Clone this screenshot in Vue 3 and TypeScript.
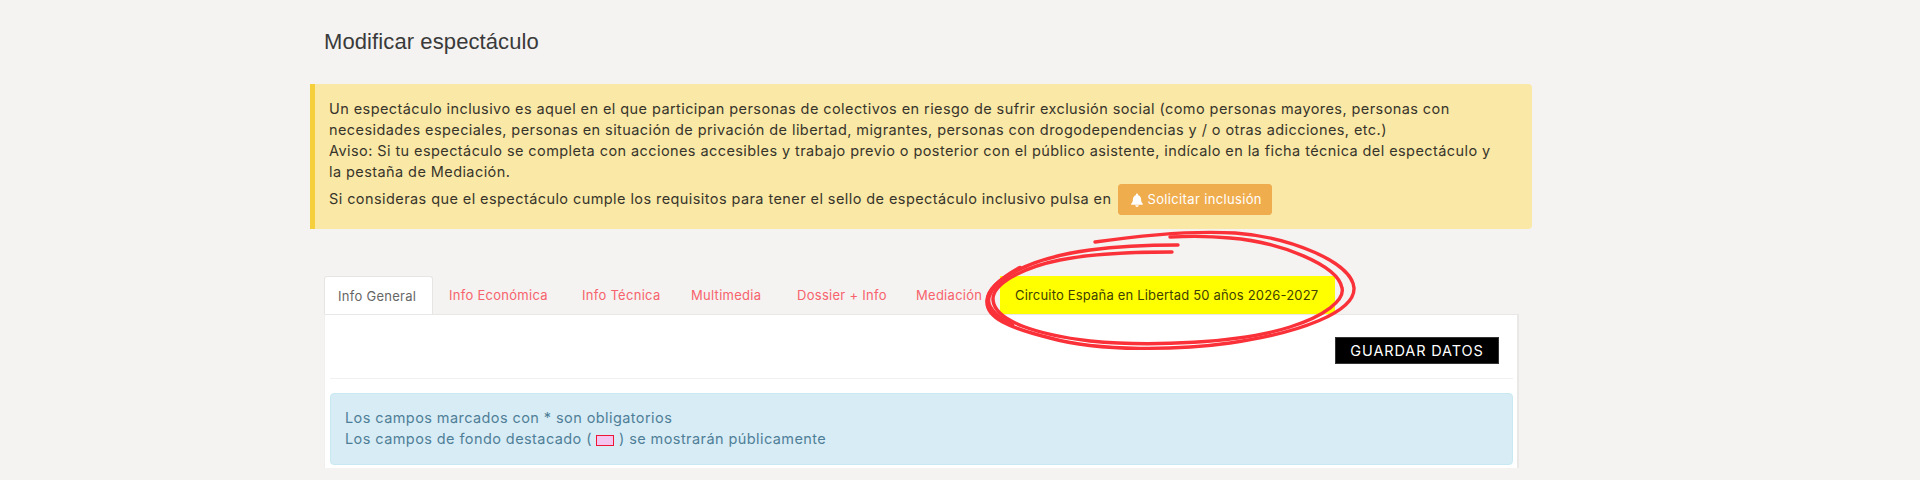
<script setup lang="ts">
const tabs: string[] = ['Info Económica', 'Info Técnica', 'Multimedia', 'Dossier + Info', 'Mediación']
</script>

<template>
  <main class="page">
    <h1 class="title">Modificar espectáculo</h1>
    <section class="notice">
      <p class="notice-text">
        Un espectáculo inclusivo es aquel en el que participan personas de colectivos en riesgo de sufrir exclusión social (como personas mayores, personas con<br />
        necesidades especiales, personas en situación de privación de libertad, migrantes, personas con drogodependencias y / o otras adicciones, etc.)<br />
        Aviso: Si tu espectáculo se completa con acciones accesibles y trabajo previo o posterior con el público asistente, indícalo en la ficha técnica del espectáculo y<br />
        la pestaña de Mediación.
      </p>
      <div class="notice-action">
        <span class="action-text">Si consideras que el espectáculo cumple los requisitos para tener el sello de espectáculo inclusivo pulsa en</span>
        <button class="request" type="button">
          <svg class="bell" viewBox="0 0 24 24" aria-hidden="true">
            <path d="M12 1a2 2 0 0 0-2 2v.7C6.900 4.600 5 7.400 5 10.800c0 4.200-1.100 5.700-3 7.700V20h20v-1.500c-1.900-2-3-3.500-3-7.700 0-3.400-1.900-6.200-5-7.100V3a2 2 0 0 0-2-2zM9 21a3 3 0 0 0 6 0z" />
          </svg>
          <span>Solicitar inclusión</span>
        </button>
      </div>
    </section>

    <section class="editor">
      <nav class="tabs">
        <a class="tab active">Info General</a>
        <a v-for="tab in tabs" :key="tab" class="tab">{{ tab }}</a>
        <a class="tab highlight">Circuito España en Libertad 50 años 2026-2027</a>
      </nav>
      <div class="panel">
        <div class="toolbar">
          <button class="save" type="button">GUARDAR DATOS</button>
        </div>
        <div class="info">
          Los campos marcados con * son obligatorios<br />
          Los campos de fondo destacado ( <i class="swatch"></i> ) se mostrarán públicamente
        </div>
      </div>
      <svg class="scribble" viewBox="980 230 380 125" aria-hidden="true">
        <path d="M1095 242C1150 234 1200 231 1235 233C1290 237 1352 262 1354 288C1355 312 1300 333 1230 343C1180 350 1100 352 1050 338C1010 328 985 318 987 300C989 280 1030 258 1090 250C1120 246 1150 245 1178 245" />
        <path d="M1172 252C1130 252 1090 254 1060 260C1020 268 992 285 993 300C995 322 1040 335 1090 341C1150 347 1240 343 1290 327C1325 316 1345 300 1342 288C1338 265 1280 242 1230 238C1210 236 1190 236 1170 237" />
        <path class="thick" d="M1020 268C1000 279 988 290 988 301C989 310 998 318 1012 325" />
      </svg>
    </section>
  </main>
</template>

<style scoped>
.page {
  box-sizing: border-box;
  width: 1920px;
  height: 480px;
  padding: 0 388px 0 310px;
  background: #f4f3f1;
  color: #333333;
  font-family: Inter, "Open Sans", sans-serif;
  overflow: hidden;
}
.title {
  box-sizing: border-box;
  height: 84px;
  margin: 0;
  padding: 29px 0 0 14px;
  font: 400 22px/26px "Liberation Sans", Arial, sans-serif;
  letter-spacing: 0.1px;
  color: #3a3a3a;
}
.notice {
  box-sizing: border-box;
  width: 1222px;
  height: 145px;
  padding: 14px 15px 0 14px;
  background: #fae8a6;
  border-left: 5px solid #f6cf3c;
  border-radius: 0 4px 4px 0;
  font-size: 14.5px;
  letter-spacing: 0.42px;
  line-height: 21px;
  color: #37352b;
}
.notice-text {
  margin: 0;
}
.notice-action {
  display: flex;
  align-items: flex-start;
  gap: 7px;
  margin-top: 1px;
}
.action-text {
  padding-top: 5px;
}
.request {
  display: inline-flex;
  align-items: center;
  gap: 3px;
  box-sizing: border-box;
  width: 154px;
  height: 31px;
  margin-top: 1px;
  padding: 0 0 0 11px;
  border: 1px solid #eeac4f;
  border-radius: 3px;
  background: #f0ad4e;
  color: #ffffff;
  font: inherit;
  font-size: 13px;
  letter-spacing: 0.35px;
  white-space: nowrap;
}
.bell {
  width: 14px;
  height: 14px;
  fill: #ffffff;
}
.editor {
  position: relative;
  width: 1195px;
  margin: 47px 0 0 14px;
}
.tabs {
  display: grid;
  grid-template-columns: 109px 133px 109px 106px 119px 100px 335px;
  height: 38px;
  font-size: 13px;
  letter-spacing: 0.28px;
}
.tab {
  display: flex;
  align-items: center;
  padding-left: 16px;
  color: #f7626d;
  white-space: nowrap;
}
.active {
  box-sizing: border-box;
  padding-left: 13px;
  background: #ffffff;
  color: #666666;
  border: 1px solid #e6e5e3;
  border-bottom: 0;
  border-radius: 3px 3px 0 0;
}
.highlight {
  padding-left: 15px;
  background: #ffff00;
  color: #3f3f00;
  letter-spacing: 0.18px;
}
.panel {
  box-sizing: border-box;
  height: 154px;
  padding: 0 4px 0 5px;
  background: #ffffff;
  border-top: 1px solid #e8e7e5;
  border-right: 2px solid #e9e8e6;
  border-left: 1px solid #f0efed;
}
.toolbar {
  display: flex;
  justify-content: flex-end;
  align-items: flex-start;
  box-sizing: border-box;
  height: 64px;
  padding: 22px 14px 0 0;
  border-bottom: 1px solid #f1f1f1;
}
.save {
  box-sizing: border-box;
  width: 164px;
  height: 27px;
  padding: 0;
  border: 1px solid #333333;
  background: #000000;
  color: #ffffff;
  font: inherit;
  font-size: 14.5px;
  letter-spacing: 0.86px;
}
.info {
  box-sizing: border-box;
  height: 72px;
  margin-top: 14px;
  padding: 13px 14px 0;
  background: #d8ecf5;
  border: 1px solid #c9e9f2;
  border-radius: 4px;
  color: #4f7f98;
  font-size: 14.5px;
  letter-spacing: 0.42px;
  line-height: 21px;
}
.swatch {
  display: inline-block;
  box-sizing: border-box;
  width: 18px;
  height: 11px;
  vertical-align: -2px;
  background: #f4c6ef;
  border: 1px solid #ee1736;
}
.scribble {
  position: absolute;
  left: 656px;
  top: -46px;
  width: 380px;
  height: 125px;
  overflow: visible;
  fill: none;
  stroke: #fa3138;
  stroke-width: 3.4;
  stroke-linecap: round;
}
.thick {
  stroke-width: 4.5;
}
</style>
